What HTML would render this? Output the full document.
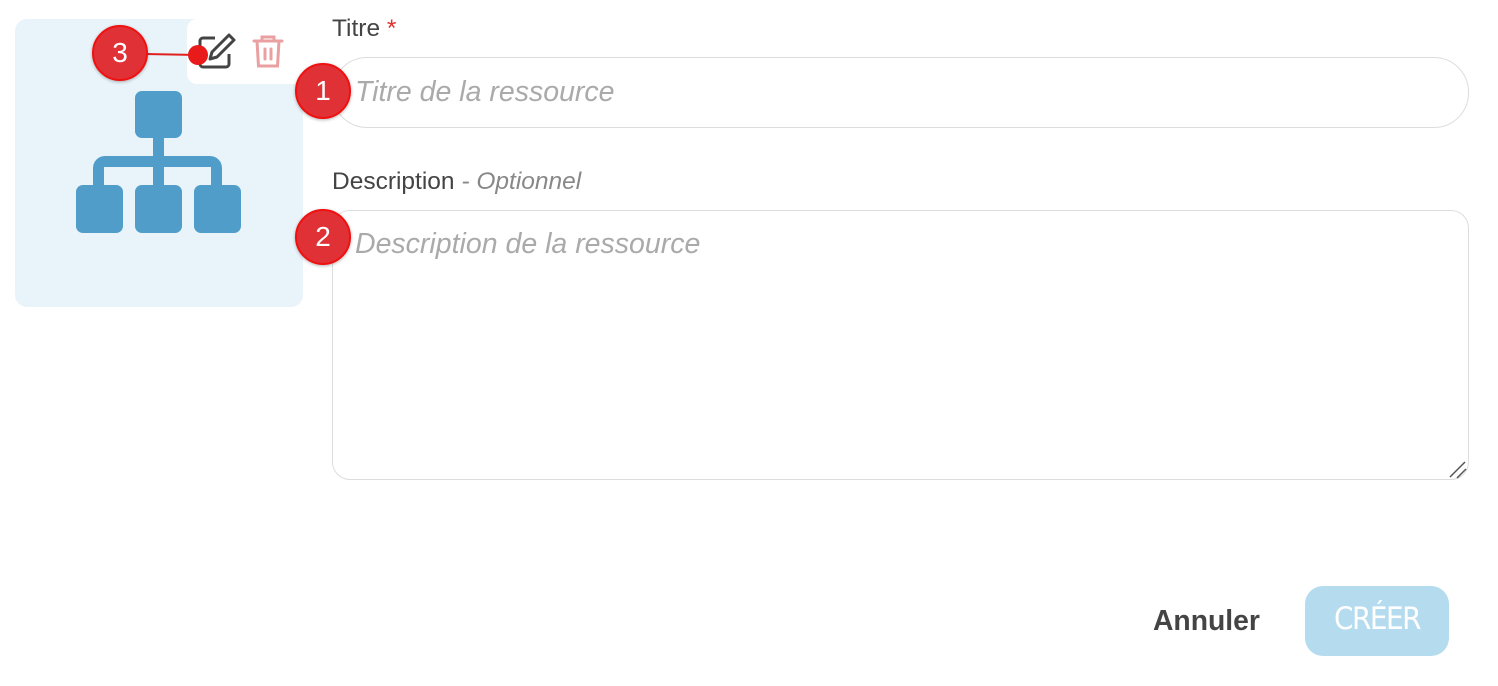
<!DOCTYPE html>
<html><head><meta charset="utf-8"><style>
body{margin:0;width:1498px;height:686px;background:#fff;font-family:"Liberation Sans",sans-serif;position:relative;overflow:hidden}
.a{position:absolute}
.card{left:15px;top:19px;width:288px;height:288px;background:#e9f4fa;border-radius:12px}
.tb{left:187px;top:19px;width:116px;height:65px;background:#fff;border-radius:10px}
.lbl{font-size:24.5px;color:#444}
.inp{left:332px;top:57px;width:1135px;height:69px;border:1px solid #ddd;border-radius:35px}
.ta{left:332px;top:210px;width:1135px;height:268px;border:1px solid #ddd;border-radius:18px}
.ph{font-size:28.5px;font-style:italic;color:#aaa}
.badge{width:52px;height:52px;border-radius:50%;background:#e03236;border:2px solid #f01010;color:#fff;font-size:28px;text-align:center;line-height:52px;box-shadow:0 1px 3px rgba(0,0,0,.3)}
.btn{left:1305px;top:586px;width:144px;height:70px;background:#b5dbef;border-radius:18px;color:#fff;font-size:31px;text-align:center;line-height:66px;font-family:"DejaVu Sans Condensed","Liberation Sans Narrow",sans-serif;letter-spacing:-1.5px}
</style></head><body>
<div class="a card"></div>
<svg class="a" style="left:0;top:0" width="310" height="320">
<g fill="#509dca">
<rect x="135" y="91" width="47" height="47" rx="7"/>
<rect x="153" y="136" width="11" height="52"/>
<path d="M93 185 V168 a12 12 0 0 1 12 -12 H210 a12 12 0 0 1 12 12 V185 H211 V167 H104 V185Z"/>
<rect x="76" y="185" width="47" height="48" rx="7"/>
<rect x="135" y="185" width="47" height="48" rx="7"/>
<rect x="194" y="185" width="47" height="48" rx="7"/>
</g>
</svg>
<div class="a tb"></div>
<svg class="a" style="left:195px;top:30px" width="100" height="44">
<path d="M20 8 H8 a3 3 0 0 0 -3 3 V34 a3 3 0 0 0 3 3 H31 a3 3 0 0 0 3 -3 V24" fill="none" stroke="#444" stroke-width="3"/>
<path d="M34 5 l5 5 L22 27 l-7 2 l2 -7 Z" fill="none" stroke="#444" stroke-width="3" stroke-linejoin="round"/>
<g fill="none" stroke="#eaa0a0" stroke-width="3" stroke-linecap="round">
<path d="M59 11 H87 M67 11 V7 H79 V11 M62 11 L63.5 36 H82.5 L84 11 M70 19 V29 M76 19 V29"/>
</g>
</svg>
<svg class="a" style="left:140px;top:44px" width="70" height="22"><line x1="5" y1="10" x2="58" y2="11" stroke="#e02020" stroke-width="2"/><circle cx="58" cy="11" r="10" fill="#e81a1a"/></svg>
<div class="a badge" style="left:92px;top:25px">3</div>
<div class="a lbl" style="left:332px;top:15px">Titre <span style="color:#e03030">*</span></div>
<div class="a inp"></div>
<div class="a ph" style="left:355px;top:76px">Titre de la ressource</div>
<div class="a lbl" style="left:332px;top:168px">Description <span style="color:#888;font-style:italic">- Optionnel</span></div>
<div class="a ta"></div>
<div class="a ph" style="left:355px;top:228px">Description de la ressource</div>
<svg class="a" style="left:1448px;top:460px" width="20" height="20"><path d="M2 17 L17 2 M9 18 L18 9" stroke="#555" stroke-width="1.5"/></svg>
<div class="a badge" style="left:295px;top:63px">1</div>
<div class="a badge" style="left:295px;top:209px">2</div>
<div class="a" style="left:1153px;top:604px;font-size:28.3px;font-weight:bold;color:#444">Annuler</div>
<div class="a btn">CRÉER</div>
</body></html>
